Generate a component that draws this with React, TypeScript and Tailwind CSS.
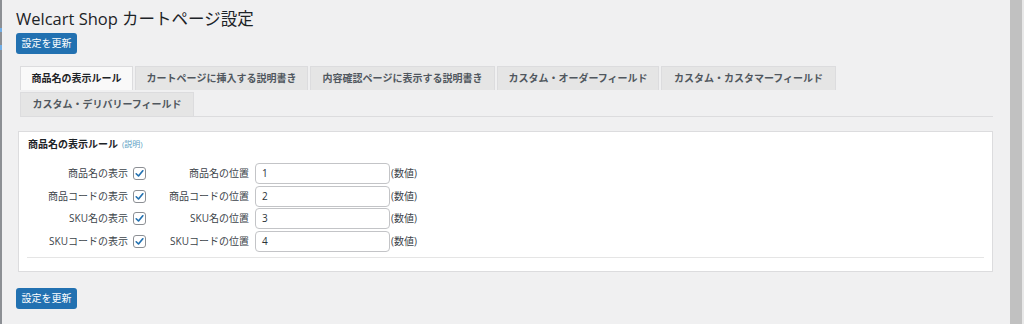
import React from "react";

const FONT = '"Open Sans", "Noto Sans CJK JP", sans-serif';

function Check() {
  return (
    <span className="w-[13px] h-[13px] border border-[#8c8f94] rounded-[3px] bg-white flex items-center justify-center">
      <svg width="11" height="11" viewBox="0 0 20 20">
        <path d="M4 10.5 L8.2 14.5 L16 5" fill="none" stroke="#2271b1" strokeWidth="3" strokeLinecap="round" strokeLinejoin="round" />
      </svg>
    </span>
  );
}

const tabs: { label: string; w: string; active?: boolean }[] = [
  { label: "商品名の表示ルール", w: "w-[113px]", active: true },
  { label: "カートページに挿入する説明書き", w: "w-[173px]" },
  { label: "内容確認ページに表示する説明書き", w: "w-[185px]" },
  { label: "カスタム・オーダーフィールド", w: "w-[162px]" },
  { label: "カスタム・カスタマーフィールド", w: "w-[175px]" },
  { label: "カスタム・デリバリーフィールド", w: "w-[174px]" },
];

const rows = [
  ["商品名の表示", "商品名の位置", "1"],
  ["商品コードの表示", "商品コードの位置", "2"],
  ["SKU名の表示", "SKU名の位置", "3"],
  ["SKUコードの表示", "SKUコードの位置", "4"],
];

function Button() {
  return (
    <button className="block w-[61px] h-[21px] bg-[#2271b1] rounded-[3px] text-white text-[10px] leading-[21px] text-center">
      設定を更新
    </button>
  );
}

export default function App() {
  return (
    <div className="w-[1024px] h-[324px] bg-[#f0f0f1] flex overflow-hidden" style={{ fontFamily: FONT }}>
      <div className="w-[2px] h-full bg-[#8c8f94] flex flex-col">
        <div className="h-[28px]" />
        <div className="h-[4px] bg-[#72aee6]" />
        <div className="h-[13px]" />
        <div className="h-[5px] bg-[#72aee6]" />
      </div>
      <div className="flex-1 flex flex-col pl-[14px] pr-[17px] pt-[7px]">
        <h1 className="text-[16.5px] leading-[24px] text-[#1d2327] font-normal">Welcart Shop カートページ設定</h1>
        <div className="mt-[2px] flex">
          <Button />
        </div>
        <div className="mt-[12px] ml-[4px] flex flex-wrap gap-[2px] border-b border-[#dcdcde]">
          {tabs.map((t) => (
            <div
              key={t.label}
              className={
                "h-[24px] border border-b-0 border-[#dcdcde] flex items-center justify-center text-[10px] font-bold whitespace-nowrap " +
                t.w +
                (t.active ? " bg-[#f9f9f9] text-[#1d2327]" : " bg-[#e5e5e5] text-[#50575e]")
              }
            >
              {t.label}
            </div>
          ))}
        </div>
        <div className="mt-[14px] ml-[2px] bg-white border border-[#dcdcde] pt-[5px] pb-[13px] px-[8px]">
          <div className="pl-[1px] text-[10px] leading-[14px] font-bold text-[#1d2327] flex items-center">
            商品名の表示ルール
            <span className="ml-[4px] text-[8px] font-normal text-[#5e9fc4]">(説明)</span>
          </div>
          <div className="mt-[12px] flex flex-col gap-[1.5px] -ml-[8px]">
            {rows.map((r) => (
              <div key={r[0]} className="flex items-center h-[21px] text-[10px] text-[#3c434a]">
                <div className="w-[109px] text-right">{r[0]}</div>
                <div className="ml-[5px]">
                  <Check />
                </div>
                <div className="w-[103px] text-right">{r[1]}</div>
                <div className="ml-[6px] w-[135px] h-[21px] border border-[#c3c4c7] rounded-[4px] bg-white flex items-center pl-[6px] text-[#2c3338]">
                  {r[2]}
                </div>
                <div className="ml-[1px] text-[#3c434a]">(数値)</div>
              </div>
            ))}
          </div>
          <div className="mt-[5px] h-px bg-[#e5e5e5]" />
        </div>
        <div className="mt-[16px] flex">
          <Button />
        </div>
      </div>
      <div className="w-[12px] h-full bg-[#c1c1c1]" />
      <div className="w-[2px] h-full bg-[#e8e8e8]" />
    </div>
  );
}
